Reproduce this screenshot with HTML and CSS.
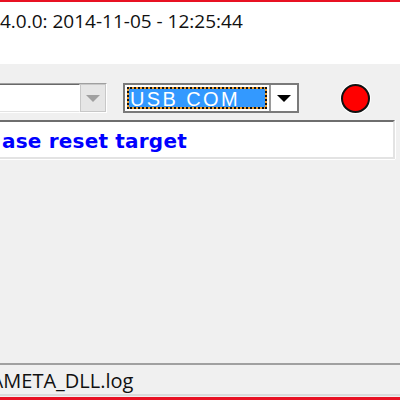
FILE: index.html
```html
<!DOCTYPE html>
<html lang="en">
<head>
  <meta charset="UTF-8" />
  <title>META Tool</title>
  <link rel="stylesheet" href="styles.css">
</head>
<body>

<div class="window">
  <header class="titlebar">4.0.0: 2014-11-05 - 12:25:44</header>

  <div class="client">
    <div class="toolbar">
      <div class="combo combo-left">
        <div class="combo-field"></div>
        <div class="combo-btn"><span class="arrow arrow-off"></span></div>
      </div>
      <div class="combo combo-right">
        <div class="combo-field">
          <div class="selected">USB COM</div>
        </div>
        <div class="combo-btn"><span class="arrow"></span></div>
      </div>
      <div class="led"></div>
    </div>

    <div class="output">ase reset target</div>

    <div class="spacer"></div>

    <div class="statusbar">\META_DLL.log</div>
  </div>
</div>

</body>
</html>
```

FILE: styles.css
```css
* { margin: 0; padding: 0; box-sizing: border-box; }
body { width: 400px; height: 400px; overflow: hidden; background: #f0f0f0; }
.window {
  display: flex; flex-direction: column; height: 400px;
  border-top: 2px solid #e81123; border-bottom: 3px solid #e81123;
}
.titlebar {
  height: 62px; background: #fff; color: #111;
  font-family: 'Open Sans', sans-serif; font-size: 19px;
  padding: 6px 0 0 0;
}
.client { flex: 1; display: flex; flex-direction: column; background: #f0f0f0; }
.toolbar {
  display: flex; align-items: center; margin-top: 19px; height: 30px;
}
.combo {
  display: flex; height: 30px;
  border: 1px solid; border-color: #a0a0a0 #fff #fff #a0a0a0;
}
.combo-left { width: 118px; margin-left: -11px; }
.combo-left .combo-field { flex: 1; background: #fff; border: 1px solid; border-color: #696969 #fff #e3e3e3 #696969; }
.combo-left .combo-btn { width: 26px; background: #e6e6e6; border: 1px solid #c8c8c8; }
.combo-right {
  width: 176px; margin-left: 16px;
  border: 2px solid #7a7a7a; background: #fff;
}
.combo-right .combo-field { flex: 1; padding: 2px; }
.selected {
  height: 100%; color: #fff;
  font-family: 'Liberation Sans', sans-serif; font-size: 20px; letter-spacing: 2.4px;
  line-height: 21px; padding-left: 1px;
  border: 2px dotted #111;
  background: linear-gradient(#3399ff, #3399ff) padding-box, linear-gradient(#f0a030, #f0a030) border-box;
}
.combo-right .combo-btn { width: 28px; background: #fff; border-left: 2px solid #9a9a9a; }
.combo-btn { display: flex; align-items: center; justify-content: center; }
.arrow {
  width: 0; height: 0;
  border-left: 7px solid transparent; border-right: 7px solid transparent;
  border-top: 7px solid #000;
}
.arrow-off { border-top-color: #a0a0a0; }
.led {
  width: 29px; height: 29px; margin-left: 42px; border-radius: 50%;
  background: #ff0000; border: 2px solid #111; box-shadow: 0 0 0 1px #fff;
}
.output {
  margin: 7px 5px 0 -4px; height: 39px;
  background: #fff; color: #0000ff;
  border-top: 2px solid #6e6e6e; border-right: 2px solid #e3e3e3; border-bottom: 2px solid #e3e3e3;
  font-family: 'DejaVu Sans', sans-serif; font-weight: bold; font-size: 20px; letter-spacing: 0.2px;
  padding: 7px 0 0 6px; line-height: 24px;
  box-shadow: 0 1px 0 #fff, 1px 0 0 #fff;
}
.spacer { flex: 1; }
.statusbar {
  height: 33px; border-top: 2px solid #a0a0a0; border-bottom: 2px solid #dadada;
  font-family: 'Open Sans', sans-serif; font-size: 20px; color: #111;
  padding: 2px 0 0 0; margin-left: -4px; margin-bottom: 1px; line-height: 27px;
}
```
